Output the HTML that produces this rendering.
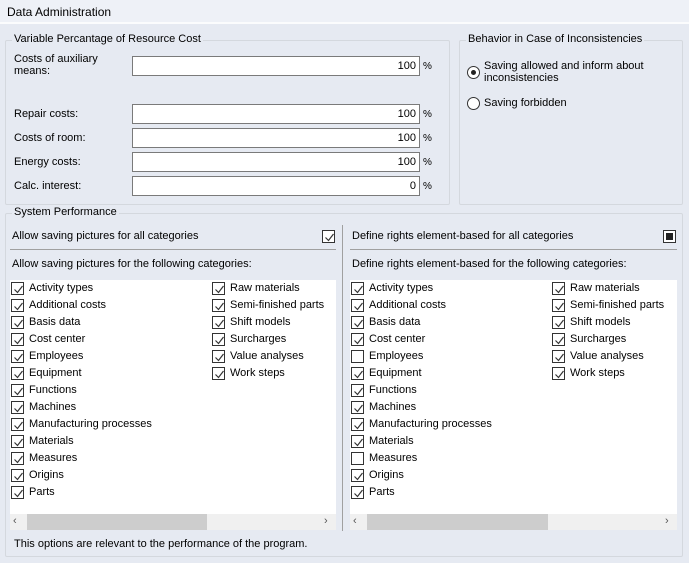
<!DOCTYPE html>
<html><head><style>
*{margin:0;padding:0;box-sizing:border-box}
body{width:689px;height:563px;background:#e6eaf2;font-family:"Liberation Sans",sans-serif;font-size:11px;color:#000;position:relative;overflow:hidden}
.a{position:absolute;white-space:nowrap}
.grp{position:absolute;border:1px solid #d4d8de;border-radius:2px}
.lg{position:absolute;background:#e6eaf2;padding:0 2px;font-size:11px}
.tb{position:absolute;left:132px;width:288px;height:20px;background:#fff;border:1px solid #7a7a7a;text-align:right;padding-right:3px;line-height:18px}
.pc{position:absolute;left:423px;font-size:10px}
.cb{position:absolute;width:13px;height:13px;border:1px solid #333;background:#fff}
.cb svg{position:absolute;left:1px;top:1px}
.list{position:absolute;background:#fff}
.it{position:absolute;height:17px;line-height:15px;width:190px}
.it .cb{left:0;top:1px}
.it span{position:absolute;left:18px;top:0;white-space:nowrap}
.sb{position:absolute;height:16px;background:#f0f0f0}
.th{position:absolute;top:0;height:16px;background:#cdcdcd}
</style></head><body>
<div class="a" style="left:0;top:0;width:689px;height:24px;background:#eef1f7;border-bottom:2px solid #fbfcfd"></div>
<div class="a" style="left:7px;top:5px;font-size:12px">Data Administration</div>

<div class="grp" style="left:5px;top:40px;width:445px;height:165px"></div>
<div class="lg" style="left:12px;top:33px">Variable Percantage of Resource Cost</div>
<div class="a" style="left:14px;top:53px;line-height:12px">Costs of auxiliary<br>means:</div>
<div class="tb" style="top:56px">100</div><div class="pc" style="top:61px">%</div>
<div class="a" style="left:14px;top:108px">Repair costs:</div>
<div class="tb" style="top:104px">100</div><div class="pc" style="top:109px">%</div>
<div class="a" style="left:14px;top:132px">Costs of room:</div>
<div class="tb" style="top:128px">100</div><div class="pc" style="top:133px">%</div>
<div class="a" style="left:14px;top:156px">Energy costs:</div>
<div class="tb" style="top:152px">100</div><div class="pc" style="top:157px">%</div>
<div class="a" style="left:14px;top:180px">Calc. interest:</div>
<div class="tb" style="top:176px">0</div><div class="pc" style="top:181px">%</div>

<div class="grp" style="left:459px;top:40px;width:224px;height:165px"></div>
<div class="lg" style="left:466px;top:33px">Behavior in Case of Inconsistencies</div>
<div class="a" style="left:467px;top:66px;width:13px;height:13px;border:1px solid #333;border-radius:50%;background:#fff"><div style="position:absolute;left:3px;top:3px;width:5px;height:5px;border-radius:50%;background:#222"></div></div>
<div class="a" style="left:484px;top:60px;line-height:12px">Saving allowed and inform about<br>inconsistencies</div>
<div class="a" style="left:467px;top:97px;width:13px;height:13px;border:1px solid #333;border-radius:50%;background:#fff"></div>
<div class="a" style="left:484px;top:97px">Saving forbidden</div>

<div class="grp" style="left:5px;top:213px;width:678px;height:344px"></div>
<div class="lg" style="left:12px;top:206px">System Performance</div>
<div class="a" style="left:342px;top:225px;width:1px;height:306px;background:#a0a0a0"></div>

<div class="a" style="left:12px;top:230px">Allow saving pictures for all categories</div>
<div class="cb" style="left:322px;top:230px"><svg width="11" height="11"><path d="M1.5 5.5 L4.5 8.5 L9.5 2" stroke="#333" fill="none" stroke-width="1.2"/></svg></div>
<div class="a" style="left:10px;top:249px;width:326px;height:1px;background:#a0a0a0"></div>
<div class="a" style="left:12px;top:258px">Allow saving pictures for the following categories:</div>

<div class="a" style="left:352px;top:230px">Define rights element-based for all categories</div>
<div class="cb" style="left:663px;top:230px"><div style="position:absolute;left:2px;top:2px;width:7px;height:7px;background:#222"></div></div>
<div class="a" style="left:350px;top:249px;width:327px;height:1px;background:#a0a0a0"></div>
<div class="a" style="left:352px;top:258px">Define rights element-based for the following categories:</div>

<div class="list" style="left:10px;top:280px;width:326px;height:235px"></div>
<div class="sb" style="left:10px;top:514px;width:326px"><div class="th" style="left:17px;width:180px"></div><div class="a" style="left:3px;top:1px;font-size:11px;color:#555">&#8249;</div><div class="a" style="left:314px;top:1px;font-size:11px;color:#555">&#8250;</div></div>
<div class="list" style="left:350px;top:280px;width:327px;height:235px"></div>
<div class="sb" style="left:350px;top:514px;width:327px"><div class="th" style="left:17px;width:181px"></div><div class="a" style="left:3px;top:1px;font-size:11px;color:#555">&#8249;</div><div class="a" style="left:315px;top:1px;font-size:11px;color:#555">&#8250;</div></div>

<svg width="0" height="0" style="position:absolute"><defs><symbol id="k" viewBox="0 0 11 11"><path d="M1.5 5.5 L4.5 8.5 L9.5 2" stroke="#333" fill="none" stroke-width="1.2"/></symbol></defs></svg>

<div class="it" style="left:11px;top:281px"><div class="cb"><svg width="11" height="11"><use href="#k"/></svg></div><span>Activity types</span></div>
<div class="it" style="left:11px;top:298px"><div class="cb"><svg width="11" height="11"><use href="#k"/></svg></div><span>Additional costs</span></div>
<div class="it" style="left:11px;top:315px"><div class="cb"><svg width="11" height="11"><use href="#k"/></svg></div><span>Basis data</span></div>
<div class="it" style="left:11px;top:332px"><div class="cb"><svg width="11" height="11"><use href="#k"/></svg></div><span>Cost center</span></div>
<div class="it" style="left:11px;top:349px"><div class="cb"><svg width="11" height="11"><use href="#k"/></svg></div><span>Employees</span></div>
<div class="it" style="left:11px;top:366px"><div class="cb"><svg width="11" height="11"><use href="#k"/></svg></div><span>Equipment</span></div>
<div class="it" style="left:11px;top:383px"><div class="cb"><svg width="11" height="11"><use href="#k"/></svg></div><span>Functions</span></div>
<div class="it" style="left:11px;top:400px"><div class="cb"><svg width="11" height="11"><use href="#k"/></svg></div><span>Machines</span></div>
<div class="it" style="left:11px;top:417px"><div class="cb"><svg width="11" height="11"><use href="#k"/></svg></div><span>Manufacturing processes</span></div>
<div class="it" style="left:11px;top:434px"><div class="cb"><svg width="11" height="11"><use href="#k"/></svg></div><span>Materials</span></div>
<div class="it" style="left:11px;top:451px"><div class="cb"><svg width="11" height="11"><use href="#k"/></svg></div><span>Measures</span></div>
<div class="it" style="left:11px;top:468px"><div class="cb"><svg width="11" height="11"><use href="#k"/></svg></div><span>Origins</span></div>
<div class="it" style="left:11px;top:485px"><div class="cb"><svg width="11" height="11"><use href="#k"/></svg></div><span>Parts</span></div>

<div class="it" style="left:212px;top:281px"><div class="cb"><svg width="11" height="11"><use href="#k"/></svg></div><span>Raw materials</span></div>
<div class="it" style="left:212px;top:298px"><div class="cb"><svg width="11" height="11"><use href="#k"/></svg></div><span>Semi-finished parts</span></div>
<div class="it" style="left:212px;top:315px"><div class="cb"><svg width="11" height="11"><use href="#k"/></svg></div><span>Shift models</span></div>
<div class="it" style="left:212px;top:332px"><div class="cb"><svg width="11" height="11"><use href="#k"/></svg></div><span>Surcharges</span></div>
<div class="it" style="left:212px;top:349px"><div class="cb"><svg width="11" height="11"><use href="#k"/></svg></div><span>Value analyses</span></div>
<div class="it" style="left:212px;top:366px"><div class="cb"><svg width="11" height="11"><use href="#k"/></svg></div><span>Work steps</span></div>

<div class="it" style="left:351px;top:281px"><div class="cb"><svg width="11" height="11"><use href="#k"/></svg></div><span>Activity types</span></div>
<div class="it" style="left:351px;top:298px"><div class="cb"><svg width="11" height="11"><use href="#k"/></svg></div><span>Additional costs</span></div>
<div class="it" style="left:351px;top:315px"><div class="cb"><svg width="11" height="11"><use href="#k"/></svg></div><span>Basis data</span></div>
<div class="it" style="left:351px;top:332px"><div class="cb"><svg width="11" height="11"><use href="#k"/></svg></div><span>Cost center</span></div>
<div class="it" style="left:351px;top:349px"><div class="cb"></div><span>Employees</span></div>
<div class="it" style="left:351px;top:366px"><div class="cb"><svg width="11" height="11"><use href="#k"/></svg></div><span>Equipment</span></div>
<div class="it" style="left:351px;top:383px"><div class="cb"><svg width="11" height="11"><use href="#k"/></svg></div><span>Functions</span></div>
<div class="it" style="left:351px;top:400px"><div class="cb"><svg width="11" height="11"><use href="#k"/></svg></div><span>Machines</span></div>
<div class="it" style="left:351px;top:417px"><div class="cb"><svg width="11" height="11"><use href="#k"/></svg></div><span>Manufacturing processes</span></div>
<div class="it" style="left:351px;top:434px"><div class="cb"><svg width="11" height="11"><use href="#k"/></svg></div><span>Materials</span></div>
<div class="it" style="left:351px;top:451px"><div class="cb"></div><span>Measures</span></div>
<div class="it" style="left:351px;top:468px"><div class="cb"><svg width="11" height="11"><use href="#k"/></svg></div><span>Origins</span></div>
<div class="it" style="left:351px;top:485px"><div class="cb"><svg width="11" height="11"><use href="#k"/></svg></div><span>Parts</span></div>

<div class="it" style="left:552px;top:281px"><div class="cb"><svg width="11" height="11"><use href="#k"/></svg></div><span>Raw materials</span></div>
<div class="it" style="left:552px;top:298px"><div class="cb"><svg width="11" height="11"><use href="#k"/></svg></div><span>Semi-finished parts</span></div>
<div class="it" style="left:552px;top:315px"><div class="cb"><svg width="11" height="11"><use href="#k"/></svg></div><span>Shift models</span></div>
<div class="it" style="left:552px;top:332px"><div class="cb"><svg width="11" height="11"><use href="#k"/></svg></div><span>Surcharges</span></div>
<div class="it" style="left:552px;top:349px"><div class="cb"><svg width="11" height="11"><use href="#k"/></svg></div><span>Value analyses</span></div>
<div class="it" style="left:552px;top:366px"><div class="cb"><svg width="11" height="11"><use href="#k"/></svg></div><span>Work steps</span></div>

<div class="a" style="left:14px;top:538px">This options are relevant to the performance of the program.</div>
</body></html>
